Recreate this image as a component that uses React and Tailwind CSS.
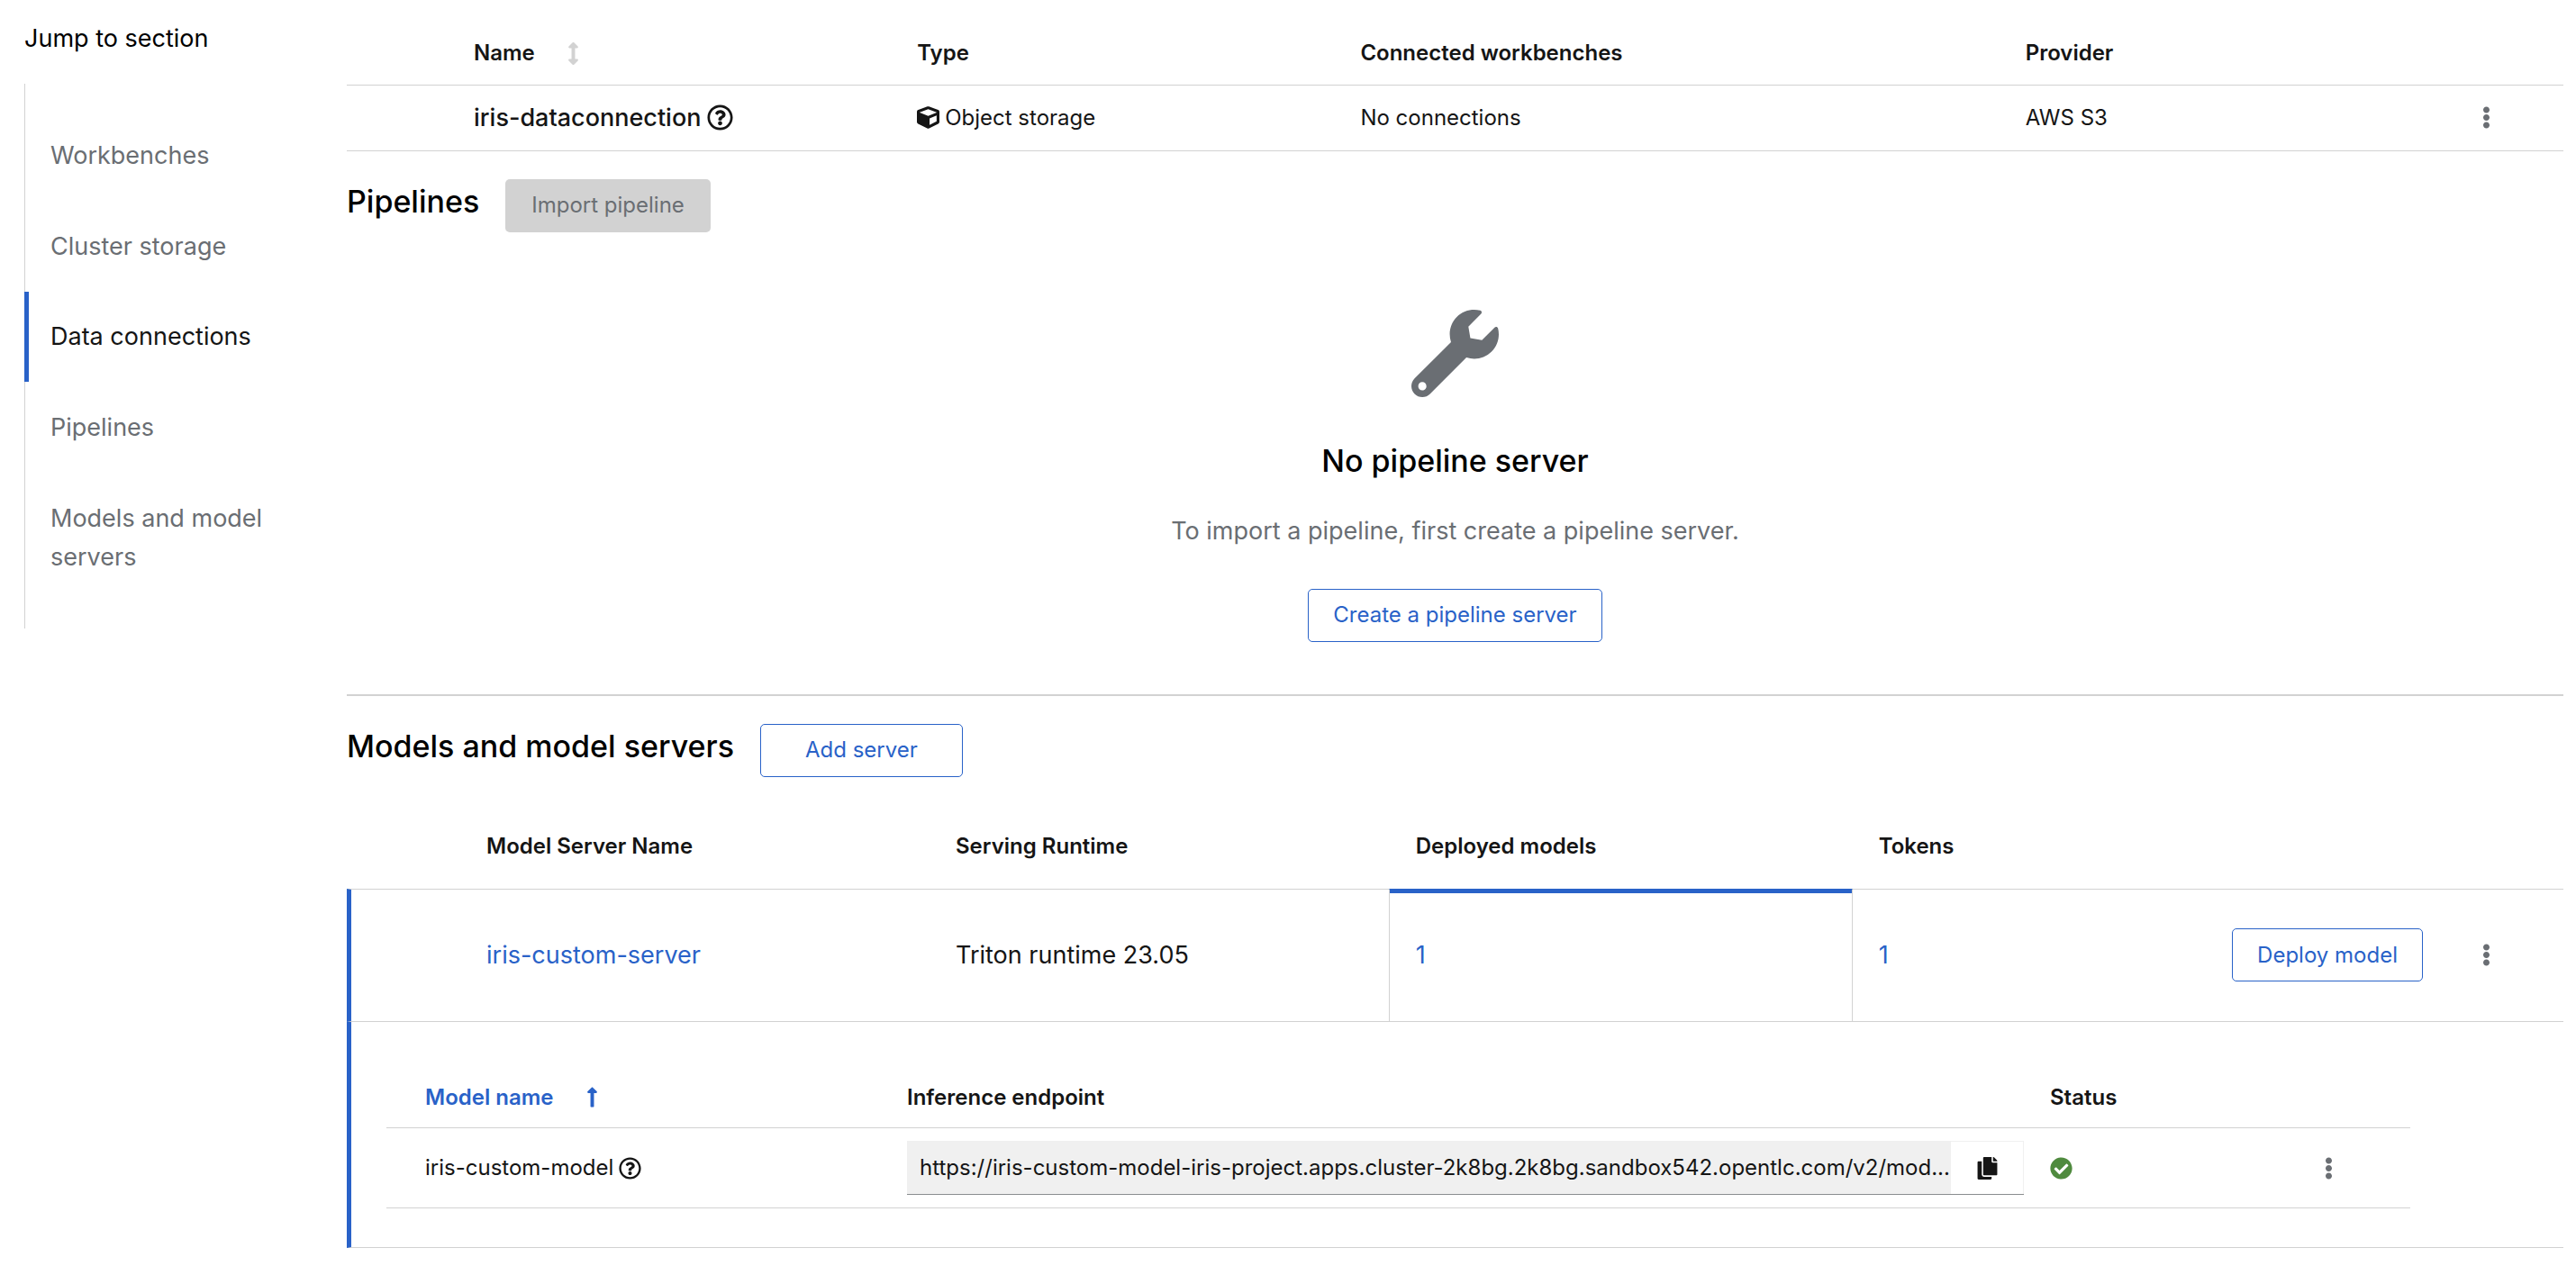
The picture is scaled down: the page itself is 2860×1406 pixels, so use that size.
import {
  FaArrowsAltV,
  FaCheckCircle,
  FaCopy,
  FaCube,
  FaEllipsisV,
  FaLongArrowAltUp,
  FaRegQuestionCircle,
  FaWrench,
} from "react-icons/fa";

const sections = [
  { label: "Workbenches", href: "#workbenches" },
  { label: "Cluster storage", href: "#cluster-storage" },
  { label: "Data connections", href: "#data-connections", current: true },
  { label: "Pipelines", href: "#pipelines" },
  { label: "Models and model servers", href: "#models" },
];

function JumpLinks() {
  return (
    <nav aria-label="Jump to section" className="w-[300px] shrink-0">
      <div className="pt-[21px] pb-[29px] text-[27px] leading-[43px] text-black">Jump to section</div>
      <ul className="border-l border-[#d2d2d2] py-[29px] text-[27px] leading-[43px]">
        {sections.map((s) => (
          <li key={s.label} className="-ml-px">
            <a
              href={s.href}
              aria-current={s.current ? "location" : undefined}
              className={
                s.current
                  ? "block border-l-[5px] border-[#2962c8] pt-[28px] pb-[29px] pl-[24px] text-[#151515]"
                  : "block py-[29px] pl-[29px] text-[#6a6e73]"
              }
            >
              {s.label}
            </a>
          </li>
        ))}
      </ul>
    </nav>
  );
}

function Kebab({ label }) {
  return (
    <button
      type="button"
      aria-label={label}
      className="inline-flex h-[48px] w-[68px] items-center justify-center align-middle text-[25px] text-[#6a6e73]"
    >
      <FaEllipsisV />
    </button>
  );
}

function OutlineButton({ children, wide }) {
  return (
    <button
      type="button"
      className={
        "h-[59px] rounded-[5px] border border-[#2962c8] text-[24px] leading-[38px] whitespace-nowrap text-[#2962c8] " +
        (wide ? "px-[49px]" : "px-[27px]")
      }
    >
      {children}
    </button>
  );
}

function HelpButton({ label }) {
  return (
    <button type="button" aria-label={label} className="inline-flex">
      <FaRegQuestionCircle />
    </button>
  );
}

function DataConnections() {
  return (
    <section id="data-connections" aria-label="Data connections">
      <table className="w-full table-fixed text-left text-[24px] leading-[38px] text-[#151515]">
        <colgroup>
          <col className="w-[141px]" />
          <col className="w-[20%]" />
          <col className="w-[20%]" />
          <col className="w-[30%]" />
          <col />
          <col className="w-[156px]" />
        </colgroup>
        <thead>
          <tr className="h-[94px] border-b border-[#d2d2d2]">
            <td />
            <th scope="col" className="pt-[25px] font-semibold">
              <button type="button" className="flex items-center gap-[36px] font-semibold">
                Name
                <FaArrowsAltV className="w-[13px] text-[25px] text-[#d2d2d2]" />
              </button>
            </th>
            <th scope="col" className="pt-[25px] font-semibold">Type</th>
            <th scope="col" className="pt-[25px] font-semibold">Connected workbenches</th>
            <th scope="col" className="pt-[25px] font-semibold">Provider</th>
            <td />
          </tr>
        </thead>
        <tbody>
          <tr className="h-[73px] border-b border-[#d2d2d2]">
            <td />
            <td>
              <span className="flex items-center gap-[7px] text-[27px] font-medium">
                iris-dataconnection
                <span className="inline-flex text-[29px]">
                  <HelpButton label="More info about iris-dataconnection" />
                </span>
              </span>
            </td>
            <td>
              <span className="flex items-center gap-[6px]">
                <FaCube className="text-[25px]" />
                Object storage
              </span>
            </td>
            <td>No connections</td>
            <td>AWS S3</td>
            <td className="pl-[36px]">
              <Kebab label="Data connection actions" />
            </td>
          </tr>
        </tbody>
      </table>
    </section>
  );
}

function Pipelines() {
  return (
    <section id="pipelines" className="border-b-2 border-[#d2d2d2] pt-[31px] pb-[58px]">
      <div className="flex items-start gap-[29px]">
        <h2 className="text-[34px] leading-[50px] font-medium text-black">Pipelines</h2>
        <button
          type="button"
          disabled
          className="h-[59px] rounded-[5px] bg-[#d2d2d2] px-[29px] text-[24px] leading-[38px] text-[#6a6e73]"
        >
          Import pipeline
        </button>
      </div>
      <div className="flex flex-col items-center pt-[86px] text-center">
        <FaWrench className="text-[97px] text-[#6a6e73]" />
        <h3 className="mt-[47px] text-[34px] leading-[47px] font-medium text-black">No pipeline server</h3>
        <p className="mt-[33px] mb-[43px] text-[27px] leading-[43px] text-[#6a6e73]">
          To import a pipeline, first create a pipeline server.
        </p>
        <OutlineButton>Create a pipeline server</OutlineButton>
      </div>
    </section>
  );
}

function DeployedModels() {
  return (
    <table className="w-full table-fixed text-left text-[24px] leading-[38px] text-[#151515]">
      <colgroup>
        <col className="w-[578px]" />
        <col />
        <col className="w-[265px]" />
        <col className="w-[135px]" />
      </colgroup>
      <thead>
        <tr className="h-[75px] border-b border-[#d2d2d2]">
          <th scope="col" aria-sort="ascending" className="pt-[8px] pl-[43px]">
            <button type="button" className="flex items-center gap-[36px] font-semibold text-[#2962c8]">
              Model name
              <FaLongArrowAltUp className="w-[13px] text-[25px]" />
            </button>
          </th>
          <th scope="col" className="pt-[8px] font-semibold">Inference endpoint</th>
          <th scope="col" className="pt-[8px] font-semibold">Status</th>
          <td />
        </tr>
      </thead>
      <tbody>
        <tr className="h-[89px] border-b border-[#d2d2d2]">
          <td className="pl-[43px]">
            <span className="flex items-center gap-[6px]">
              iris-custom-model
              <span className="inline-flex text-[25px]">
                <HelpButton label="More info about iris-custom-model" />
              </span>
            </span>
          </td>
          <td className="pr-[29px]">
            <div className="flex h-[60px] border-b border-[#8a8d90]">
              <input
                readOnly
                aria-label="Inference endpoint"
                value="https://iris-custom-model-iris-project.apps.cluster-2k8bg.2k8bg.sandbox542.opentlc.com/v2/mod..."
                className="min-w-0 flex-1 bg-[#f0f0f0] pl-[14px] text-[24px] leading-[38px] outline-none"
              />
              <button
                type="button"
                aria-label="Copy endpoint"
                className="flex w-[81px] items-center justify-center border-t border-r border-[#f0f0f0] text-[25px]"
              >
                <FaCopy />
              </button>
            </div>
          </td>
          <td>
            <FaCheckCircle role="img" aria-label="Loaded" className="text-[25px] text-[#4f8a3e]" />
          </td>
          <td className="pl-[10px]">
            <Kebab label="Model actions" />
          </td>
        </tr>
      </tbody>
    </table>
  );
}

function ModelServers() {
  return (
    <section id="models" className="pt-[31px]">
      <div className="flex items-start gap-[29px]">
        <h2 className="text-[34px] leading-[50px] font-medium text-black">Models and model servers</h2>
        <OutlineButton wide>Add server</OutlineButton>
      </div>
      <table className="mt-[24px] w-full table-fixed border-separate border-spacing-0 text-left text-[24px] leading-[38px] text-[#151515]">
        <colgroup>
          <col className="w-[126px]" />
          <col className="w-[521px]" />
          <col />
          <col className="w-[515px]" />
          <col className="w-[12%]" />
          <col className="w-[338px]" />
          <col className="w-[156px]" />
        </colgroup>
        <thead>
          <tr className="h-[100px]">
            <td />
            <th scope="col" className="px-[29px] pt-[6px] font-semibold">Model Server Name</th>
            <th scope="col" className="px-[29px] pt-[6px] font-semibold">Serving Runtime</th>
            <th scope="col" className="px-[30px] pt-[6px] font-semibold">Deployed models</th>
            <th scope="col" className="px-[29px] pt-[6px] font-semibold">Tokens</th>
            <td />
            <td />
          </tr>
        </thead>
        <tbody>
          <tr className="h-[147px] text-[27px]">
            <td className="border-t border-l-[5px] border-t-[#d2d2d2] border-l-[#2962c8]" />
            <td className="border-t border-[#d2d2d2] px-[29px]">
              <a href="#iris-custom-server" className="text-[#2962c8]">iris-custom-server</a>
            </td>
            <td className="border-t border-[#d2d2d2] px-[29px]">Triton runtime 23.05</td>
            <td className="border-x border-t border-x-[#d2d2d2] border-t-[#2962c8] p-0 shadow-[inset_0_4px_0_#2962c8]">
              <button type="button" aria-expanded="true" className="px-[29px] text-[#2962c8]">1</button>
            </td>
            <td className="border-t border-[#d2d2d2] p-0">
              <button type="button" className="px-[29px] text-[#2962c8]">1</button>
            </td>
            <td className="border-t border-[#d2d2d2] text-right">
              <OutlineButton>Deploy model</OutlineButton>
            </td>
            <td className="border-t border-[#d2d2d2] pl-[36px]">
              <Kebab label="Model server actions" />
            </td>
          </tr>
          <tr>
            <td
              colSpan={7}
              className="border-t border-b border-l-[5px] border-y-[#d2d2d2] border-l-[#2962c8] pt-[43px] pr-[170px] pb-[43px] pl-[39px]"
            >
              <DeployedModels />
            </td>
          </tr>
        </tbody>
      </table>
    </section>
  );
}

export default function App() {
  return (
    <div className="flex min-h-screen gap-[58px] bg-white pr-[14px] pl-[27px] font-['Inter',sans-serif]">
      <JumpLinks />
      <main className="min-w-0 flex-1">
        <DataConnections />
        <Pipelines />
        <ModelServers />
      </main>
    </div>
  );
}
